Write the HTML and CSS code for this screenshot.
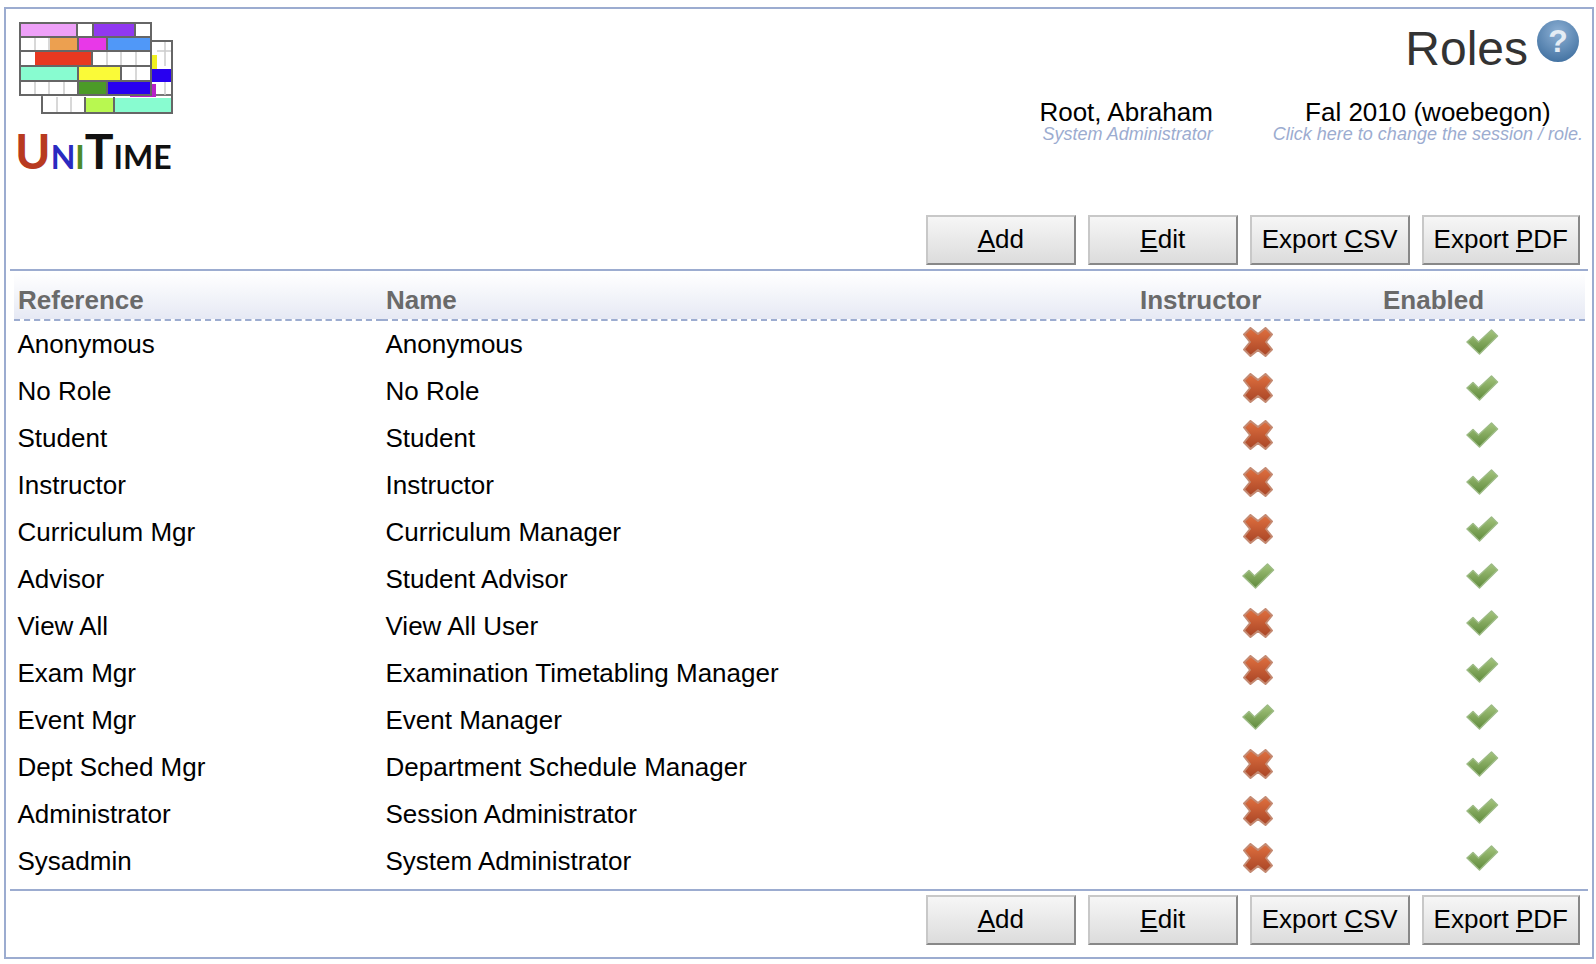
FILE: index.html
```html
<!DOCTYPE html>
<html lang="en">
<head>
<meta charset="utf-8">
<title>Roles</title>
<link rel="stylesheet" href="styles.css">
</head>
<body>
<svg class="defs" width="0" height="0" aria-hidden="true">
  <defs>
    <linearGradient id="xg" x1="0" y1="0" x2="0" y2="1"><stop offset="0" stop-color="#e0703f"/><stop offset="1" stop-color="#a84526"/></linearGradient>
    <linearGradient id="cg" x1="0" y1="0" x2="0" y2="1"><stop offset="0" stop-color="#a4c47c"/><stop offset="1" stop-color="#5f8a3c"/></linearGradient>
    <radialGradient id="hg" cx="0.5" cy="0.3" r="0.75"><stop offset="0" stop-color="#8db0d4"/><stop offset="1" stop-color="#3f6f9f"/></radialGradient>
    <symbol id="ix" viewBox="0 0 34 34"><path d="M9.500 3 17 9l7.500-6 6.500 6.500L25 17l6 7.500-6.500 6.500L17 25l-7.500 6L3 24.500 9 17 3 9.500z" fill="url(#xg)" stroke="#c48a72" stroke-width="2" stroke-linejoin="round"/></symbol>
    <symbol id="ic" viewBox="0 0 34 28"><path d="M2 14 8 8.500 13.500 14 26.500 2 32.500 8 14.500 26z" fill="url(#cg)" stroke="#9dbb85" stroke-width="1.500" stroke-linejoin="round"/></symbol>
  </defs>
</svg>
<div class="page">
  <header class="top">
    <div class="brand">
      <svg class="grid" width="158" height="95" viewBox="18 21 158 95">
        <g fill="#fff" stroke="#777" stroke-width="2">
          <rect x="130" y="41" width="42" height="72"/>
          <rect x="42" y="95" width="130" height="18"/>
          <rect x="20" y="23" width="131" height="72"/>
        </g>
        <g stroke="#ccc" stroke-width="1.500">
          <path d="M35 37v14M49 37v14M35 81v14M49 81v14M64 81v14M107 51v15M121 51v30M136 51v30M165 41v25M165 81v14M57 97v16M71 97v16M121 66h30M107 51h44M157 51h15"/>
        </g>
        <g>
          <rect class="pink" x="20" y="23" width="57" height="14"/>
          <rect class="purple" x="93" y="23" width="42" height="14"/>
          <rect class="orange" x="50" y="38" width="28" height="13"/>
          <rect class="magenta" x="78" y="38" width="28" height="13"/>
          <rect class="sky" x="107" y="38" width="43" height="13"/>
          <rect class="red" x="35" y="52" width="57" height="14"/>
          <rect class="yellow2" x="150" y="55" width="7" height="14"/>
          <rect class="teal" x="20" y="67" width="58" height="14"/>
          <rect class="yellow" x="79" y="67" width="41" height="14"/>
          <rect class="blue" x="150" y="69" width="22" height="13"/>
          <rect class="green" x="78" y="81" width="29" height="14"/>
          <rect class="magenta2" x="130" y="84" width="26" height="13"/>
          <rect class="blue" x="107" y="81" width="43" height="14"/>
          <rect class="lime" x="85" y="98" width="29" height="14"/>
          <rect class="teal" x="115" y="98" width="57" height="14"/>
        </g>
        <g fill="none" stroke="#666" stroke-width="2">
          <path d="M20 23h131v72H20zM151 41h21v72H42V97M77 23v14M93 23v14M135 23v14M20 37h131M20 51h131M20 66h131M20 81h131M78 37v14M107 37v14M92 51v15M78 66v29M121 66v15M107 81v14M85 97v16M114 97v16"/>
        </g>
      </svg>
      <div class="wordmark"><span class="big red-t">U</span><span class="mid blue-t">N</span><span class="mid green-t">I</span><span class="big">T</span><span class="mid">IME</span></div>
    </div>
    <div class="info">
      <div class="title-row">
        <h1>Roles</h1>
        <svg class="help" width="44" height="44" viewBox="0 0 44 44">
          <circle cx="22" cy="22" r="21" fill="url(#hg)"/>
          <text x="22" y="33" class="q">?</text>
        </svg>
      </div>
      <div class="who">
        <div class="who-user">
          <div class="main">Root, Abraham</div>
          <div class="sub">System Administrator</div>
        </div>
        <div class="who-session">
          <div class="main">Fal 2010 (woebegon)</div>
          <div class="sub">Click here to change the session / role.</div>
        </div>
      </div>
    </div>
  </header>
  <div class="buttons upper">
    <button class="btn"><u>A</u>dd</button>
    <button class="btn"><u>E</u>dit</button>
    <button class="btn"><span>Export <u>C</u>SV</span></button>
    <button class="btn"><span>Export <u>P</u>DF</span></button>
  </div>
  <table class="roles">
    <colgroup><col class="c1"><col class="c2"><col class="c3"><col class="c4"></colgroup>
    <thead>
      <tr><th>Reference</th><th>Name</th><th>Instructor</th><th>Enabled</th></tr>
    </thead>
    <tbody>
      <tr><td>Anonymous</td><td>Anonymous</td><td class="i"><svg class="x"><use href="#ix"/></svg></td><td class="i"><svg class="v"><use href="#ic"/></svg></td></tr>
      <tr><td>No Role</td><td>No Role</td><td class="i"><svg class="x"><use href="#ix"/></svg></td><td class="i"><svg class="v"><use href="#ic"/></svg></td></tr>
      <tr><td>Student</td><td>Student</td><td class="i"><svg class="x"><use href="#ix"/></svg></td><td class="i"><svg class="v"><use href="#ic"/></svg></td></tr>
      <tr><td>Instructor</td><td>Instructor</td><td class="i"><svg class="x"><use href="#ix"/></svg></td><td class="i"><svg class="v"><use href="#ic"/></svg></td></tr>
      <tr><td>Curriculum Mgr</td><td>Curriculum Manager</td><td class="i"><svg class="x"><use href="#ix"/></svg></td><td class="i"><svg class="v"><use href="#ic"/></svg></td></tr>
      <tr><td>Advisor</td><td>Student Advisor</td><td class="i"><svg class="v"><use href="#ic"/></svg></td><td class="i"><svg class="v"><use href="#ic"/></svg></td></tr>
      <tr><td>View All</td><td>View All User</td><td class="i"><svg class="x"><use href="#ix"/></svg></td><td class="i"><svg class="v"><use href="#ic"/></svg></td></tr>
      <tr><td>Exam Mgr</td><td>Examination Timetabling Manager</td><td class="i"><svg class="x"><use href="#ix"/></svg></td><td class="i"><svg class="v"><use href="#ic"/></svg></td></tr>
      <tr><td>Event Mgr</td><td>Event Manager</td><td class="i"><svg class="v"><use href="#ic"/></svg></td><td class="i"><svg class="v"><use href="#ic"/></svg></td></tr>
      <tr><td>Dept Sched Mgr</td><td>Department Schedule Manager</td><td class="i"><svg class="x"><use href="#ix"/></svg></td><td class="i"><svg class="v"><use href="#ic"/></svg></td></tr>
      <tr><td>Administrator</td><td>Session Administrator</td><td class="i"><svg class="x"><use href="#ix"/></svg></td><td class="i"><svg class="v"><use href="#ic"/></svg></td></tr>
      <tr><td>Sysadmin</td><td>System Administrator</td><td class="i"><svg class="x"><use href="#ix"/></svg></td><td class="i"><svg class="v"><use href="#ic"/></svg></td></tr>
    </tbody>
  </table>
  <div class="buttons lower">
    <button class="btn"><u>A</u>dd</button>
    <button class="btn"><u>E</u>dit</button>
    <button class="btn"><span>Export <u>C</u>SV</span></button>
    <button class="btn"><span>Export <u>P</u>DF</span></button>
  </div>
</div>
</body>
</html>
```

FILE: styles.css
```css
* { box-sizing: border-box; }
html, body { margin: 0; padding: 0; background: #fff; }
body { font-family: "Liberation Sans", Arial, sans-serif; font-size: 26px; color: #000; height: 964px; overflow: hidden; padding: 7px 2px 0 4px; }
.defs { position: absolute; }
.page { border: 2px solid #9cacd0; height: 952px; padding: 0 4px; }

.top { display: flex; justify-content: space-between; height: 202px; }
.brand { padding: 12px 0 0 8px; width: 170px; }
.grid { display: block; filter: blur(0.5px); }
.wordmark { font-family: "Lato", sans-serif; font-weight: 700; line-height: 1; margin: 11px 0 0 -3px; white-space: nowrap; display: flex; align-items: baseline; color: #111; }
.big { font-size: 48px; }
.mid { font-size: 32px; }
.red-t { color: #b83a20; }
.blue-t { color: #2a2ac0; }
.green-t { color: #4d8a2a; }

.pink { fill: #eea0f8; }
.purple { fill: #9038f0; }
.orange { fill: #eca050; }
.magenta { fill: #e838e8; }
.magenta2 { fill: #b820c8; }
.sky { fill: #5098f8; }
.red { fill: #e83820; }
.yellow { fill: #fafa38; }
.yellow2 { fill: #f0f020; }
.teal { fill: #88fcd0; }
.blue { fill: #2800f0; }
.green { fill: #4c9a28; }
.lime { fill: #b8f850; }

.info { display: flex; flex-direction: column; align-items: flex-end; }
.title-row { display: flex; align-items: flex-start; height: 90px; padding-top: 10px; }
h1 { margin: 3px 8px 0 0; font-size: 48px; font-weight: normal; line-height: 54px; color: #333; }
.help { margin-right: 8px; }
.q { font-family: "Liberation Sans", sans-serif; font-size: 32px; font-weight: bold; fill: #e4ecf4; text-anchor: middle; }
.who { display: flex; gap: 60px; padding-right: 5px; }
.who-user { text-align: right; }
.who-session { text-align: center; }
.main { font-size: 26px; line-height: 26px; }
.sub { font-size: 18px; line-height: 19px; font-style: italic; color: #9cacd0; }

.buttons { display: flex; justify-content: flex-end; gap: 12px; padding-right: 8px; }
.upper { height: 60px; padding-top: 4px; border-bottom: 2px solid #9cacd0; align-items: flex-start; }
.lower { height: 57px; padding-top: 4px; border-top: 2px solid #9cacd0; align-items: flex-start; margin-top: 5px; }
.btn { height: 50px; min-width: 150px; padding: 0 10px 2px; font: 26px "Liberation Sans", Arial, sans-serif; color: #000; background: linear-gradient(#f6f6f6, #dcdcdc); border: 2px solid; border-color: #c8c8c8 #888 #888 #c8c8c8; border-radius: 0; }

.roles { border-collapse: collapse; table-layout: fixed; width: 1571px; margin: 2px 0 0 4px; }
.c1 { width: 368px; }
.c2 { width: 754px; }
.c3 { width: 243px; }
.c4 { width: 206px; }
th { height: 47px; padding: 12px 4px 0; vertical-align: top; text-align: left; font-size: 26px; line-height: 30px; color: #6a6a6a; background: linear-gradient(#fff, #e6e9f4); border-bottom: 2px dashed #9cacd0; }
td { height: 47px; padding: 0 4px 0 3.500px; line-height: 30px; }
.i { text-align: center; padding: 0; vertical-align: top; }
.x { width: 34px; height: 34px; display: block; margin: 4px auto 0; filter: blur(0.4px); }
.v { width: 34px; height: 28px; display: block; margin: 7px auto 0; filter: blur(0.4px); }
```
